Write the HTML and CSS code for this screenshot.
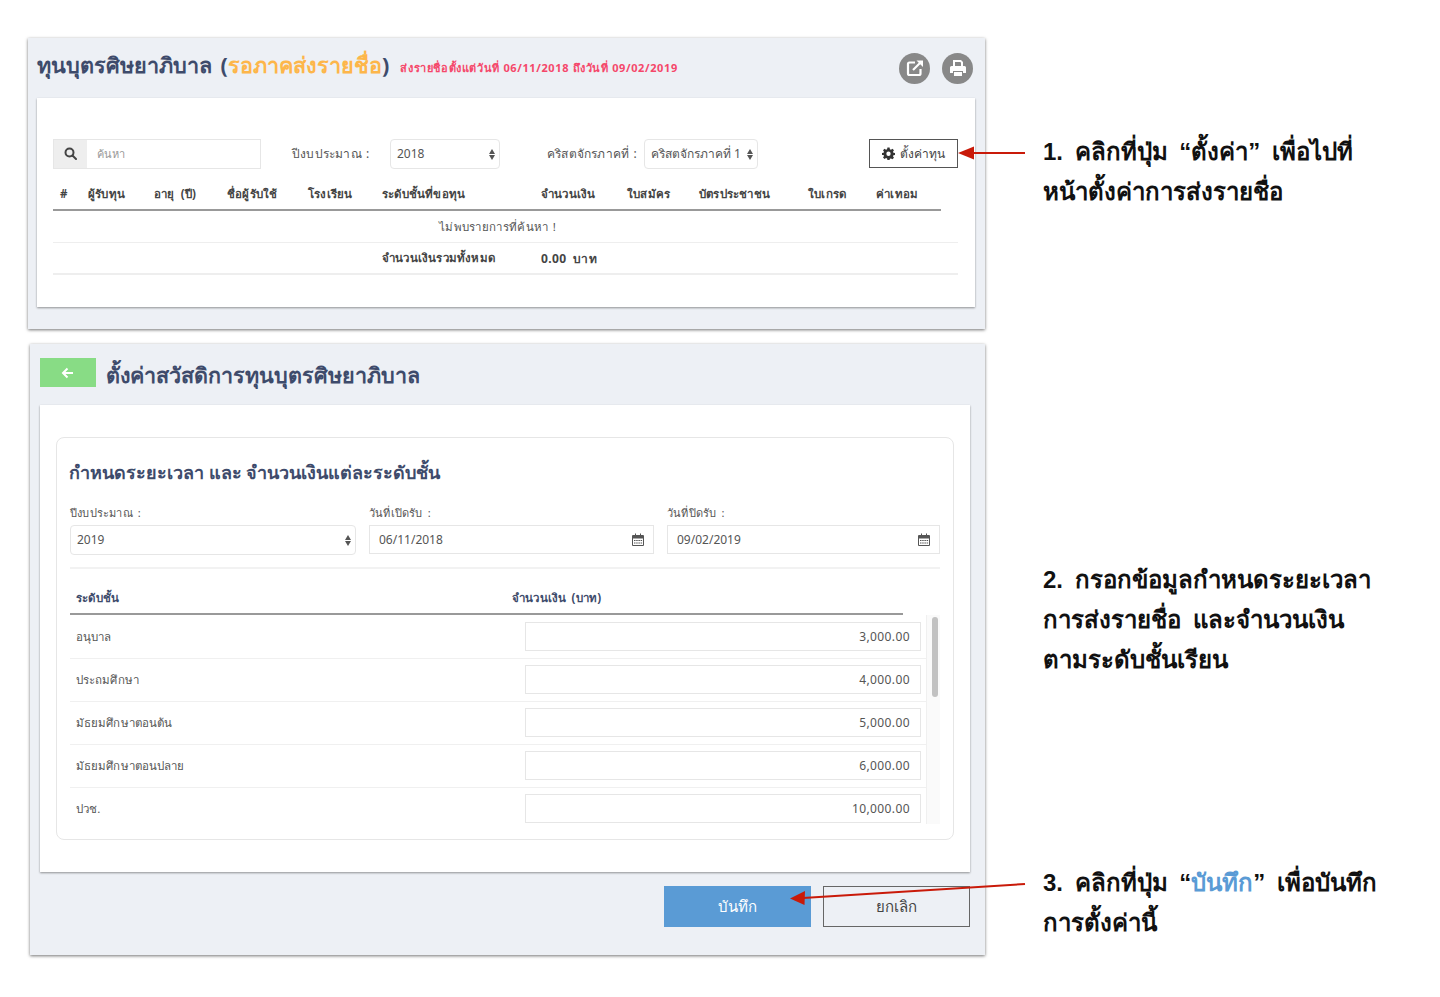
FILE: index.html
```html
<!DOCTYPE html>
<html lang="th">
<head>
    <meta charset="UTF-8">
    <title>ทุนบุตรศิษยาภิบาล</title>
    <link rel="stylesheet" href="styles.css">
</head>
<body>
<div class="canvas">

    <!-- window 1: list -->
    <section class="window window-list">
        <header class="list-head">
            <h1 class="title">ทุนบุตรศิษยาภิบาล (<span class="title-wait">รอภาคส่งรายชื่อ</span>)</h1>
            <span class="title-note">ส่งรายชื่อตั้งแต่วันที่ 06/11/2018 ถึงวันที่ 09/02/2019</span>
            <div class="round-btns">
                <span class="round-btn">
                    <svg width="18" height="18" viewBox="0 0 18 18" fill="none" stroke="#fff" stroke-width="2.2"><path d="M9 3.500H3.500a1.500 1.500 0 0 0-1.500 1.500v9.500a1.500 1.500 0 0 0 1.500 1.500H13a1.500 1.500 0 0 0 1.500-1.500V10"/><path d="M7 11 15.500 2.500"/><path d="M10.500 1.500h6.500v6.500" stroke="none" fill="#fff"/></svg>
                </span>
                <span class="round-btn">
                    <svg width="18" height="18" viewBox="0 0 18 18" fill="#fff"><path d="M4 1h8l2 2v4h-2V3.500L11 3H6v4H4z"/><path d="M2.500 7h13A1.500 1.500 0 0 1 17 8.500V14h-3v-2H4v2H1V8.500A1.500 1.500 0 0 1 2.500 7z"/><path d="M5 13h8v4H5z"/></svg>
                </span>
            </div>
        </header>
        <div class="card list-card">
            <div class="toolbar">
                <div class="search">
                    <span class="search-icon">
                        <svg width="13" height="13" viewBox="0 0 13 13" fill="none" stroke="#444" stroke-width="2"><circle cx="5.500" cy="5.500" r="4"/><path d="M8.500 8.500 12 12" stroke-linecap="round"/></svg>
                    </span>
                    <span class="search-text">ค้นหา</span>
                </div>
                <label class="tool-label label-year">ปีงบประมาณ :</label>
                <div class="select select-year">2018<span class="updown"></span></div>
                <label class="tool-label label-region">คริสตจักรภาคที่ :</label>
                <div class="select select-region">คริสตจักรภาคที่ 1<span class="updown"></span></div>
                <button class="setting-btn">
                    <svg width="13" height="13" viewBox="0 0 24 24" fill="#333"><path fill-rule="evenodd" d="M10 1h4l.6 3.200 2 .8L19.300 3.200l2.800 2.800L20.300 8.700l.8 2L24 11.300v3.400l-2.900.6-.8 2 1.800 2.700-2.800 2.800-2.700-1.800-2 .8L14 24h-4l-.6-2.900-2-.8-2.700 1.800-2.800-2.800 1.800-2.700-.8-2L0 14.700v-3.400l2.900-.6.8-2L1.900 6l2.800-2.800L7.400 5l2-.8zM12 8.500a4 4 0 1 0 0 8 4 4 0 0 0 0-8z"/></svg>
                    ตั้งค่าทุน
                </button>
            </div>
            <table class="list-table">
                <thead>
                    <tr>
                        <th class="c-no">#</th><th class="c-name">ผู้รับทุน</th><th class="c-age">อายุ (ปี)</th>
                        <th class="c-pastor">ชื่อผู้รับใช้</th><th class="c-school">โรงเรียน</th><th class="c-level">ระดับชั้นที่ขอทุน</th>
                        <th class="c-money">จำนวนเงิน</th><th class="c-form">ใบสมัคร</th><th class="c-id">บัตรประชาชน</th>
                        <th class="c-grade">ใบเกรด</th><th class="c-fee">ค่าเทอม</th>
                    </tr>
                </thead>
            </table>
            <div class="list-row list-empty">ไม่พบรายการที่ค้นหา !</div>
            <div class="list-row list-total">
                <span class="total-label">จำนวนเงินรวมทั้งหมด</span>
                <span class="total-value">0.00 บาท</span>
            </div>
        </div>
    </section>

    <!-- window 2: settings -->
    <section class="window window-setting">
        <header class="setting-head">
            <span class="back-btn">
                <svg width="13" height="12" viewBox="0 0 13 12" fill="none" stroke="#fff" stroke-width="2"><path d="M12 6H2M6.500 1.500 2 6l4.500 4.500"/></svg>
            </span>
            <h1 class="title title-setting">ตั้งค่าสวัสดิการทุนบุตรศิษยาภิบาล</h1>
        </header>
        <div class="card setting-card">
            <div class="box">
                <h2 class="box-title">กำหนดระยะเวลา และ จำนวนเงินแต่ละระดับชั้น</h2>
                <div class="form-grid">
                    <div class="field field-year">
                        <label class="field-label">ปีงบประมาณ :</label>
                        <div class="select select-wide">2019<span class="updown"></span></div>
                    </div>
                    <div class="field field-open">
                        <label class="field-label">วันที่เปิดรับ :</label>
                        <div class="date-input">06/11/2018
                            <svg class="cal" width="12" height="13" viewBox="0 0 12 13"><use href="#cal-icon"/></svg>
                        </div>
                    </div>
                    <div class="field field-close">
                        <label class="field-label">วันที่ปิดรับ :</label>
                        <div class="date-input">09/02/2019
                            <svg class="cal" width="12" height="13" viewBox="0 0 12 13"><use href="#cal-icon"/></svg>
                        </div>
                    </div>
                </div>
                <div class="level-head">
                    <span class="level-col">ระดับชั้น</span>
                    <span>จำนวนเงิน (บาท)</span>
                </div>
                <div class="level-body">
                    <div class="level-rows">
                        <div class="level-row"><span class="level-name">อนุบาล</span><div class="money">3,000.00</div></div>
                        <div class="level-row"><span class="level-name">ประถมศึกษา</span><div class="money">4,000.00</div></div>
                        <div class="level-row"><span class="level-name">มัธยมศึกษาตอนต้น</span><div class="money">5,000.00</div></div>
                        <div class="level-row"><span class="level-name">มัธยมศึกษาตอนปลาย</span><div class="money">6,000.00</div></div>
                        <div class="level-row"><span class="level-name">ปวช.</span><div class="money">10,000.00</div></div>
                    </div>
                    <div class="scroll-track"><div class="scroll-thumb"></div></div>
                </div>
            </div>
        </div>
        <div class="actions">
            <button class="btn-save">บันทึก</button>
            <button class="btn-cancel">ยกเลิก</button>
        </div>
    </section>

    <!-- notes on the right -->
    <p class="note note-1">1. คลิกที่ปุ่ม “ตั้งค่า” เพื่อไปที่<br>หน้าตั้งค่าการส่งรายชื่อ</p>
    <p class="note note-2">2. กรอกข้อมูลกำหนดระยะเวลา<br>การส่งรายชื่อ และจำนวนเงิน<br>ตามระดับชั้นเรียน</p>
    <p class="note note-3">3. คลิกที่ปุ่ม “<span class="note-blue">บันทึก</span>” เพื่อบันทึก<br>การตั้งค่านี้</p>

    <!-- red arrows -->
    <svg class="arrows" width="1440" height="997" viewBox="0 0 1440 997">
        <path d="M1025 153H972" stroke="#c91a09" stroke-width="2" fill="none"/>
        <path d="M958 153 974 146.500V159.500z" fill="#c91a09"/>
        <path d="M1025 884 803 898" stroke="#c91a09" stroke-width="2" fill="none"/>
        <path d="M790 898.500 805 891 804.500 905z" fill="#c91a09"/>
    </svg>

    <svg class="icon-defs" width="0" height="0">
        <symbol id="cal-icon" viewBox="0 0 12 13">
            <path fill="#555" d="M1 2h2V.5h1V2h4V.5h1V2h2a1 1 0 0 1 1 1v9a1 1 0 0 1-1 1H1a1 1 0 0 1-1-1V3a1 1 0 0 1 1-1zm0 3.500V12h10V5.500z"/>
            <path fill="#555" d="M2 7h1.500v1H2zM4.200 7h1.500v1H4.200zM6.400 7h1.500v1H6.400zM8.600 7h1.500v1H8.600zM2 9.500h1.500v1H2zM4.200 9.500h1.500v1H4.200zM6.400 9.500h1.500v1H6.400zM8.600 9.500h1.500v1H8.600z"/>
        </symbol>
    </svg>
</div>
</body>
</html>
```

FILE: styles.css
```css
:root {
    --panel-color: #edf0f5;
    --title-color: #3e4b6b;
    --line-color: #e6e6e6;
    --text-color: #555;
}

* {
    box-sizing: border-box;
}

body {
    margin: 0;
    background: #fff;
    font-family: "Noto Sans", "DejaVu Sans", "Liberation Sans", sans-serif;
    color: var(--text-color);
}

.canvas {
    position: relative;
    width: 1440px;
    height: 997px;
    overflow: hidden;
}

.window {
    position: absolute;
    background: var(--panel-color);
    box-shadow: 0 1px 3px rgba(0, 0, 0, 0.55);
}

.window-list {
    left: 28px;
    top: 38px;
    width: 957px;
    height: 291px;
    padding: 0 10px 0 9px;
}

.window-setting {
    left: 30px;
    top: 344px;
    width: 955px;
    height: 611px;
    padding: 0 15px 0 10px;
}

.card {
    background: #fff;
    box-shadow: 0 1px 2px rgba(0, 0, 0, 0.4);
}

/* list window */
.list-head {
    display: flex;
    align-items: center;
    height: 60px;
    padding-bottom: 6px;
}

.title {
    margin: 0;
    font-size: 21.600px;
    font-weight: 700;
    word-spacing: 3px;
    color: var(--title-color);
    white-space: nowrap;
}

.title-wait {
    color: #fdb64a;
}

.title-note {
    margin: 6px 0 0 11px;
    font-size: 11px;
    font-weight: 700;
    letter-spacing: 0.62px;
    color: #f5476a;
    white-space: nowrap;
}

.round-btns {
    display: flex;
    gap: 12px;
    margin: 6px 2px 0 auto;
}

.round-btn {
    display: flex;
    align-items: center;
    justify-content: center;
    width: 31px;
    height: 31px;
    border-radius: 50%;
    background: #888;
}

.list-card {
    height: 209px;
    padding: 41px 17px 0 16px;
}

.toolbar {
    display: flex;
    align-items: center;
    height: 29px;
}

.search {
    display: flex;
    width: 208px;
    height: 30px;
    border: 1px solid var(--line-color);
}

.search-icon {
    display: flex;
    align-items: center;
    justify-content: center;
    width: 33px;
    background: #eee;
}

.search-text {
    padding-left: 10px;
    font-size: 11px;
    line-height: 28px;
    color: #999;
}

.tool-label {
    font-size: 12px;
    letter-spacing: 0.2px;
    word-spacing: 1px;
    white-space: nowrap;
}

.label-year {
    margin-left: 31px;
    width: 98px;
}

.select {
    position: relative;
    height: 30px;
    padding-left: 6px;
    border: 1px solid var(--line-color);
    border-radius: 4px;
    font-size: 12px;
    line-height: 28px;
    white-space: nowrap;
}

.select-year {
    width: 110px;
}

.label-region {
    margin-left: 47px;
    width: 97px;
}

.select-region {
    width: 114px;
}

.updown {
    position: absolute;
    right: 3px;
    top: 9px;
    width: 7px;
    height: 11px;
}

.updown::before,
.updown::after {
    content: "";
    position: absolute;
    left: 0;
    border-left: 3px solid transparent;
    border-right: 3px solid transparent;
}

.updown::before {
    top: 0;
    border-bottom: 5px solid #555;
}

.updown::after {
    bottom: 0;
    border-top: 5px solid #555;
}

.setting-btn {
    display: flex;
    align-items: center;
    justify-content: center;
    gap: 5px;
    width: 89px;
    height: 29px;
    margin-left: auto;
    padding: 0;
    background: #fff;
    border: 1px solid #555;
    font-family: inherit;
    font-size: 12px;
    color: #444;
}

.list-table {
    width: 888px;
    margin-top: 10px;
    border-collapse: collapse;
    table-layout: fixed;
}

.list-table th {
    height: 32px;
    padding: 0 0 0 7px;
    border-bottom: 2px solid #999;
    font-size: 11.500px;
    font-weight: 700;
    letter-spacing: 0.2px;
    word-spacing: 3px;
    color: #444;
    text-align: left;
    white-space: nowrap;
}

.c-no { width: 28px; }
.c-name { width: 66px; }
.c-age { width: 73px; }
.c-pastor { width: 81px; }
.c-school { width: 74px; }
.c-level { width: 159px; }
.c-money { width: 86px; }
.c-form { width: 72px; }
.c-id { width: 109px; }
.c-grade { width: 68px; }
.c-fee { width: 72px; }

.list-row {
    display: flex;
    align-items: center;
    height: 32px;
    border-bottom: 1px solid #eee;
    font-size: 11.500px;
}

.list-empty {
    justify-content: center;
    padding-right: 16px;
    letter-spacing: 0.3px;
    word-spacing: 1px;
}

.list-total {
    padding-left: 329px;
    border-bottom-width: 2px;
    font-weight: 700;
    letter-spacing: 0.2px;
    word-spacing: 3px;
    color: #444;
}

.total-label {
    width: 159px;
}

.total-value {
    font-size: 12px;
    letter-spacing: 0.4px;
}

/* settings window */
.setting-head {
    display: flex;
    align-items: center;
    gap: 10px;
    height: 61px;
}

.back-btn {
    display: flex;
    align-items: center;
    justify-content: center;
    width: 56px;
    height: 29px;
    margin-top: -4px;
    padding-right: 2px;
    background: #88dc85;
}

.title-setting {
    font-size: 21.500px;
}

.setting-card {
    height: 467px;
    padding: 32px 16px 0 16px;
}

.box {
    height: 403px;
    padding: 20px 13px 0 13px;
    border: 1px solid var(--line-color);
    border-radius: 8px;
}

.box-title {
    margin: 0 0 0 -1px;
    font-size: 18px;
    line-height: 28px;
    font-weight: 700;
    color: var(--title-color);
    white-space: nowrap;
}

.form-grid {
    display: flex;
    height: 62px;
    margin-top: 21px;
    border-bottom: 2px solid #f2f2f2;
}

.field-label {
    display: block;
    height: 18px;
    font-size: 11px;
    line-height: 12px;
    letter-spacing: 0.2px;
    word-spacing: 2px;
    white-space: nowrap;
}

.field-year { width: 286px; margin-right: 13px; }
.field-open { width: 285px; margin-right: 13px; }
.field-close { width: 273px; }

.select-wide {
    width: 100%;
    height: 30px;
}

.date-input {
    display: flex;
    align-items: center;
    justify-content: space-between;
    height: 29px;
    padding: 0 9px 0 9px;
    border: 1px solid var(--line-color);
    font-size: 12px;
}

.level-head {
    display: flex;
    align-items: center;
    width: 833px;
    height: 46px;
    padding: 14px 0 0 6px;
    border-bottom: 2px solid #999;
    font-size: 11.500px;
    font-weight: 700;
    letter-spacing: 0.2px;
    word-spacing: 2px;
    color: var(--title-color);
}

.level-col {
    width: 436px;
}

.level-body {
    display: flex;
    height: 209px;
    overflow: hidden;
}

.level-rows {
    width: 856px;
    padding-top: 1px;
}

.level-row {
    display: flex;
    align-items: center;
    justify-content: space-between;
    height: 43px;
    padding: 0 5px 0 6px;
    border-bottom: 1px solid #f0f0f0;
    font-size: 11.500px;
    letter-spacing: 0.1px;
}

.money {
    width: 396px;
    height: 29px;
    margin-top: -2px;
    padding-right: 10px;
    border: 1px solid var(--line-color);
    font-size: 12px;
    line-height: 27px;
    letter-spacing: 0.4px;
    text-align: right;
}

.scroll-track {
    width: 14px;
    padding: 2px 3px 0 5px;
    background: #fafafa;
    border-left: 1px solid #f0f0f0;
}

.scroll-thumb {
    width: 6px;
    height: 80px;
    border-radius: 3px;
    background: #c2c2c2;
}

.actions {
    display: flex;
    justify-content: flex-end;
    gap: 12px;
    margin-top: 14px;
}

.actions button {
    width: 147px;
    height: 41px;
    padding: 0;
    font-family: inherit;
    font-size: 15px;
}

.btn-save {
    background: #5a9bd5;
    border: none;
    color: #fff;
}

.btn-cancel {
    background: transparent;
    border: 1px solid #666;
    color: #444;
}

/* notes */
.note {
    position: absolute;
    left: 1043px;
    margin: 0;
    font-family: "Liberation Sans", "Noto Sans", sans-serif;
    font-size: 24px;
    line-height: 40px;
    font-weight: 700;
    word-spacing: 5px;
    color: #111;
    white-space: nowrap;
}

.note-1 { top: 132px; }
.note-2 { top: 560px; }
.note-3 { top: 863px; }

.note-blue {
    color: #5a9bd5;
}

.arrows {
    position: absolute;
    left: 0;
    top: 0;
    pointer-events: none;
}

.icon-defs {
    position: absolute;
}
```
